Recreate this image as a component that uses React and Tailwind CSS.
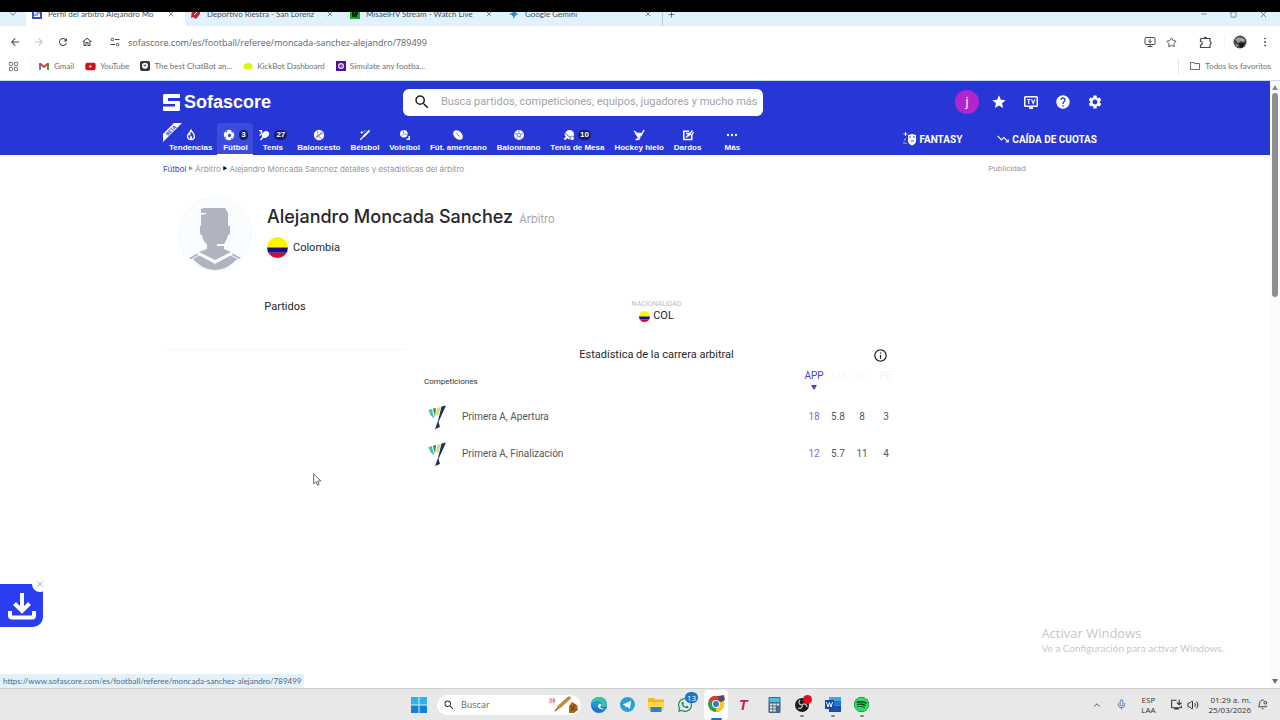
import { useState } from 'react';
import {
  MdArrowBack,
  MdArrowForward,
  MdRefresh,
  MdOutlineHome,
  MdStar,
  MdHelp,
  MdSettings,
  MdSearch,
  MdOutlineInstallDesktop,
  MdOutlineFolder,
  MdOutlineInfo,
  MdTrendingDown,
} from 'react-icons/md';
import { FaTableTennisPaddleBall, FaWhatsapp, FaSpotify, FaYoutube } from 'react-icons/fa6';
import { ChevronDown, ChevronUp, LayoutGrid, MoreVertical, Mic, Volume2, Star, X, Plus, Minus, Square, BellDot, MonitorDown } from 'lucide-react';

const SofaMark = ({ className }) => (
  <svg viewBox="0 0 17 17" className={className} fill="currentColor" aria-hidden="true">
    <path d="M1.500 0H17v4H5v3h4v3H1a1 1 0 0 1-1-1V1.500A1.500 1.500 0 0 1 1.500 0z" />
    <path d="M15.500 17H0v-4.500h12V10H9V7h7a1 1 0 0 1 1 1v7.500a1.500 1.500 0 0 1-1.500 1.500z" />
  </svg>
);

const Flag = ({ className }) => (
  <svg viewBox="0 0 20 20" className={className} role="img" aria-label="Colombia">
    <clipPath id="flag-round">
      <circle cx="10" cy="10" r="10" />
    </clipPath>
    <g clipPath="url(#flag-round)">
      <rect width="20" height="10" fill="#fdf500" />
      <rect y="10" width="20" height="5" fill="#1b0f8c" />
      <rect y="15" width="20" height="5" fill="#d80a2c" />
    </g>
  </svg>
);

const Flame = () => (
  <svg viewBox="0 0 12 12" className="h-3 w-3" fill="none" stroke="currentColor" strokeWidth="1.400">
    <path d="M6 1.200c.4 1.600 3.400 3.200 3.400 6a3.400 3.400 0 0 1-6.800 0c0-1.300.6-2.100 1.300-2.800.2.700.5 1 .9 1.200C4.700 4 5 2.300 6 1.200z" />
    <path d="M6 6.800c.8.800 1.200 1.300 1.200 2a1.200 1.200 0 0 1-2.400 0c0-.7.400-1.200 1.200-2z" fill="currentColor" stroke="none" />
  </svg>
);

const Soccer = () => (
  <svg viewBox="0 0 12 12" className="h-3 w-3">
    <circle cx="6" cy="6" r="5.200" fill="currentColor" />
    <path d="M6.500 4.500l1.800 1.300-.7 2.100H5.400l-.7-2.100zM2 3l1.800.3L4.500 1.500 3 1.800zM1.200 7.500l1.500.3.500 2-1-.6zM8 1.500l.5 1.600 2 .5-.8-1.500zM9.500 9l-1.500.5-.5 1.500 1.300-.6z" fill="#3c4bdb" />
  </svg>
);

const Tennis = () => (
  <svg viewBox="0 0 12 12" className="h-3 w-3" fill="currentColor">
    <ellipse cx="7.500" cy="5.500" rx="3.800" ry="3" transform="rotate(-35 7.500 5.500)" />
    <path d="M5.500 7.500 2.500 11" stroke="currentColor" strokeWidth="1.400" />
    <path d="M1 1.500a3 3 0 0 1 2.500 3.500L1.500 6.500M1.500 1.500h2l.5 2" stroke="currentColor" strokeWidth="1.100" fill="none" />
  </svg>
);

const Basketball = () => (
  <svg viewBox="0 0 12 12" className="h-3 w-3">
    <circle cx="6" cy="6" r="5.200" fill="currentColor" />
    <path d="M2.500 9.500l7-7M3.500 1.500c2 1.500 2 3.500 0 6M10.500 4.500c-2.500 0-4 1-5 2.500M4.500 7.500c2 0 3.500 1 4 3" fill="none" stroke="#2637d6" strokeWidth="0.600" />
  </svg>
);

const Baseball = () => (
  <svg viewBox="0 0 12 12" className="h-3 w-3" stroke="currentColor" strokeLinecap="round">
    <path d="M1.500 10.500 5 7" strokeWidth="1.200" />
    <path d="M5 7l5-5" strokeWidth="1.900" />
    <circle cx="2.800" cy="3.500" r="0.800" fill="currentColor" strokeWidth="0.800" />
    <path d="M4.500 3l1.500-1.500" strokeWidth="0.700" />
  </svg>
);

const Volleyball = () => (
  <svg viewBox="0 0 12 12" className="h-3 w-3" fill="currentColor">
    <circle cx="4.800" cy="4.800" r="3.800" />
    <path d="M4.800 4.800 4 1M4.800 4.800l3.500 1M4.800 4.800 2 7.500" stroke="#2637d6" strokeWidth="0.500" />
    <path d="M11 7v4H7.500v-1.500h2V7z" />
  </svg>
);

const Football = () => (
  <svg viewBox="0 0 12 12" className="h-3 w-3">
    <ellipse cx="6" cy="6" rx="5.600" ry="3.900" transform="rotate(45 6 6)" fill="currentColor" />
    <path d="M4.500 4.500l3 3" stroke="#2637d6" strokeWidth="0.700" />
  </svg>
);

const Handball = () => (
  <svg viewBox="0 0 12 12" className="h-3 w-3">
    <circle cx="6" cy="6" r="5" fill="currentColor" />
    <path d="M6 4.200l1.700 1.200-.6 2H4.900l-.6-2zM6 4.200V1.500M7.700 5.400l2.600-.8M7.100 7.400l1.500 2.200M4.900 7.400 3.400 9.600M4.300 5.400l-2.600-.8" fill="none" stroke="#2637d6" strokeWidth="0.600" />
  </svg>
);

const Hockey = () => (
  <svg viewBox="0 0 12 12" className="h-3 w-3" fill="none" stroke="currentColor">
    <path d="M11 1 7.500 7.500" strokeWidth="1.400" />
    <path d="M2.200 4.200h6l-1.400 3.300H4.500z" fill="currentColor" />
    <path d="M1 2l2.500 2M5 8v2.500H2.500M7 8l-1 2.500" strokeWidth="1.300" />
  </svg>
);

const Darts = () => (
  <svg viewBox="0 0 12 12" className="h-3 w-3" fill="none" stroke="currentColor">
    <path d="M7 2.200H1.800v8.300h8V6" strokeWidth="1.500" />
    <path d="M4 8.500 10.500 1.500M4 4.500h3v3M6.500 5.500h3.500L11.500 3" strokeWidth="1.300" />
  </svg>
);

const Dots = () => (
  <svg viewBox="0 0 12 12" className="h-3 w-3" fill="currentColor">
    <circle cx="2" cy="6" r="1.200" />
    <circle cx="6" cy="6" r="1.200" />
    <circle cx="10" cy="6" r="1.200" />
  </svg>
);

const sports = [
  { label: 'Tendencias', icon: <Flame /> },
  { label: 'Fútbol', icon: <Soccer />, count: 3, active: true },
  { label: 'Tenis', icon: <Tennis />, count: 27 },
  { label: 'Baloncesto', icon: <Basketball /> },
  { label: 'Béisbol', icon: <Baseball /> },
  { label: 'Voleibol', icon: <Volleyball /> },
  { label: 'Fút. americano', icon: <Football /> },
  { label: 'Balonmano', icon: <Handball /> },
  { label: 'Tenis de Mesa', icon: <FaTableTennisPaddleBall className="h-[10px] w-[10px]" />, count: 10 },
  { label: 'Hockey hielo', icon: <Hockey /> },
  { label: 'Dardos', icon: <Darts /> },
  { label: 'Más', icon: <Dots /> },
];

const competitions = [
  { name: 'Primera A, Apertura', app: 18, avg: '5.8', reds: 8, pens: 3 },
  { name: 'Primera A, Finalización', app: 12, avg: '5.7', reds: 11, pens: 4 },
];

const GeminiIcon = () => (
  <svg viewBox="0 0 10 10" className="h-[10px] w-[10px]">
    <path d="M5 0c.5 3 2 4.500 5 5-3 .5-4.500 2-5 5-.5-3-2-4.500-5-5 3-.5 4.500-2 5-5z" fill="#2e86d8" />
    <path d="M5 5H0c3 .5 4.500 2 5 5z" fill="#27a567" />
  </svg>
);

const tabs = [
  { title: 'Perfil del árbitro Alejandro Mo', icon: <span className="block h-[10px] w-[10px] bg-[#3a49d8] p-[2px] text-white"><SofaMark className="h-[6px] w-[6px]" /></span>, active: true },
  { title: 'Deportivo Riestra - San Lorenz', icon: <svg viewBox="0 0 10 10" className="h-[10px] w-[10px]"><path d="M1 0h8v5L5 10 2 8 0 9z" fill="#cf1f2e" /><path d="M3 6 7 2" stroke="#fff" /></svg> },
  { title: 'MisaelHV Stream - Watch Live', icon: <svg viewBox="0 0 10 10" className="h-[10px] w-[10px]"><rect width="10" height="10" fill="#0db01c" /><path d="M2 2h2v2h1V3h3v3H7v2H2z" fill="#02240a" /></svg> },
  { title: 'Google Gemini', icon: <GeminiIcon /> },
];

const BrowserTabs = () => (
  <div className="flex h-[14px] items-end overflow-hidden bg-[#e1f2fd] text-[8px] text-[#45525e]">
    <button type="button" aria-label="Buscar pestañas" className="flex h-6 w-[26px] shrink-0 items-center justify-center">
      <ChevronDown className="h-[10px] w-[10px]" />
    </button>
    {tabs.map((tab) => (
      <div
        key={tab.title}
        className={`flex h-6 w-[159px] shrink-0 items-center gap-[6px] pr-[10px] pl-[6px] font-[Lato,sans-serif] ${tab.active ? 'bg-white' : ''}`}
      >
        <span className="shrink-0">{tab.icon}</span>
        <span className="leading-4 whitespace-nowrap">{tab.title}</span>
        <button type="button" aria-label="Cerrar pestaña" className="ml-auto">
          <X className="h-2 w-2" />
        </button>
      </div>
    ))}
    <button type="button" aria-label="Nueva pestaña" className="flex h-6 items-center border-l border-[#b9cbd8] pl-1">
      <Plus className="h-[9px] w-[9px]" />
    </button>
    <div className="ml-auto flex h-6 items-center gap-[22px] pr-3">
      <Minus className="h-2 w-2" />
      <Square className="h-[7px] w-[7px]" />
      <X className="h-[9px] w-[9px]" />
    </div>
  </div>
);

const Toolbar = () => (
  <div className="flex h-8 items-center gap-3 bg-white pr-[9px] pl-[9px] text-[#474b50]">
    <button type="button" aria-label="Atrás"><MdArrowBack className="h-3 w-3" /></button>
    <button type="button" aria-label="Adelante" className="text-[#bfc2c5]"><MdArrowForward className="h-3 w-3" /></button>
    <button type="button" aria-label="Recargar"><MdRefresh className="h-3 w-3" /></button>
    <button type="button" aria-label="Inicio"><MdOutlineHome className="h-3 w-3" /></button>
    <div className="flex flex-1 items-center gap-2 pl-[5px]">
      <svg viewBox="0 0 10 10" className="h-[10px] w-[10px]" fill="none" stroke="currentColor">
        <circle cx="2.500" cy="2.500" r="1.300" />
        <path d="M5 2.500h4.500M.5 7.500H5" />
        <circle cx="7.500" cy="7.500" r="1.300" />
      </svg>
      <input
        aria-label="Dirección"
        className="h-4 flex-1 bg-transparent text-[9px] text-[#5d6267] outline-none"
        defaultValue="sofascore.com/es/football/referee/moncada-sanchez-alejandro/789499"
      />
    </div>
    <button type="button" aria-label="Instalar"><MonitorDown className="h-3 w-3" /></button>
    <button type="button" aria-label="Favorito" className="-ml-[2px]"><Star className="h-[11px] w-[11px]" /></button>
    <button type="button" aria-label="Extensiones" className="pl-[10px]">
      <svg viewBox="0 0 13 13" className="h-[13px] w-[13px]" fill="none" stroke="currentColor" strokeWidth="1.200">
        <path d="M1.500 2.500H11v3.300M11 8.500v3H1.500V9a1.600 1.600 0 0 0 0-3.500v-3" />
        <path d="M5 2.200a1.400 1.400 0 0 1 2.600 0M11.200 5.800a1.400 1.400 0 0 1 0 2.600" fill="currentColor" />
      </svg>
    </button>
    <button type="button" aria-label="Perfil" className="border-l border-gray-100 pl-2">
      <svg viewBox="0 0 14 14" className="h-[14px] w-[14px]">
        <circle cx="7" cy="7" r="6.500" fill="#4b474f" />
        <path d="M2 4 6 2l3 3-4 3z" fill="#9b9aa8" />
        <path d="M8 2l4 3-2 2-3-2zM2 9l3 1-1 2z" fill="#b4ae8c" />
        <path d="M6 8l6 0-2 4-3 1z" fill="#1d1924" />
      </svg>
    </button>
    <button type="button" aria-label="Menú"><MoreVertical className="h-3 w-3" /></button>
  </div>
);

const Bookmarks = () => (
  <nav className="flex h-[23px] items-start gap-[11px] border-b border-[#c5d8f4] bg-white pr-[9px] pl-2 font-[Lato,sans-serif] text-[8px] leading-4 text-[#6d7176]">
    <LayoutGrid className="mt-[3px] h-[11px] w-[11px]" />
    <a href="#gmail" className="flex items-center gap-[5px] border-l border-gray-100 pl-2">
      <svg viewBox="0 0 10 8" className="h-2 w-[10px]" fill="none" strokeWidth="2">
        <path d="M1 8V1" stroke="#4680ea" />
        <path d="M9 8V1" stroke="#37a553" />
        <path d="M1 1.500 5 5l4-3.500" stroke="#df3a31" />
      </svg>
      Gmail
    </a>
    <a href="#youtube" className="flex items-center gap-1"><FaYoutube className="h-[11px] w-[11px] text-[#d2101c]" />YouTube</a>
    <a href="#chatbot" className="flex items-center gap-1">
      <svg viewBox="0 0 10 10" className="h-[10px] w-[10px]">
        <rect width="10" height="10" rx="2" fill="#333" />
        <circle cx="5" cy="4.800" r="3" fill="#fff" />
        <path d="M5 3v3M3.500 4.500h3" stroke="#777" />
      </svg>
      The best ChatBot an...
    </a>
    <a href="#kickbot" className="flex items-center gap-1">
      <svg viewBox="0 0 10 10" className="h-[10px] w-[10px]"><path d="M1 3h2l1-1h3l1 1h1v2h1v1H9v2H6L5 9 4 8H1V6H0V5h1z" fill="#d9f11d" /></svg>
      KickBot Dashboard
    </a>
    <a href="#simulate" className="flex items-center gap-1">
      <svg viewBox="0 0 10 10" className="h-[10px] w-[10px]"><rect width="10" height="10" fill="#4a12a4" /><circle cx="5" cy="5" r="3" fill="#e9defa" /><path d="M5 3v4M3 5h4" stroke="#4a12a4" /></svg>
      Simulate any footba...
    </a>
    <a href="#favoritos" className="ml-auto flex items-center gap-1 border-l border-gray-200 pl-[10px]">
      <MdOutlineFolder className="h-3 w-3" />
      Todos los favoritos
    </a>
  </nav>
);

const SiteHeader = () => {
  const [query, setQuery] = useState('');

  return (
    <header className="bg-[#2637d6] text-white">
      <div className="mx-auto max-w-[944px]">
        <div className="flex h-[42px] items-center">
          <a href="#inicio" className="flex w-60 items-center gap-1">
            <SofaMark className="h-[17px] w-[17px]" />
            <span className="font-['Liberation_Sans',sans-serif] text-[18px] leading-5 font-bold">Sofascore</span>
          </a>
          <label className="flex h-[27px] w-[360px] items-center gap-[10px] rounded-md bg-white pl-[10px] text-[#222]">
            <MdSearch className="h-[18px] w-[18px]" />
            <input
              aria-label="Buscar"
              value={query}
              onChange={(e) => setQuery(e.target.value)}
              placeholder="Busca partidos, competiciones, equipos, jugadores y mucho más"
              className="min-w-0 flex-1 text-[11px] text-[#222] outline-none placeholder:text-[#a3a3a6]"
            />
          </label>
          <div className="ml-auto flex items-center gap-2">
            <button type="button" className="h-6 w-6 rounded-full bg-[#b324cc] text-[13px]">j</button>
            <button type="button" aria-label="Favoritos" className="flex w-6 justify-center"><MdStar className="h-4 w-4" /></button>
            <button type="button" aria-label="TV" className="flex w-6 justify-center">
              <svg viewBox="0 0 14 13" className="h-[13px] w-[14px]" fill="none" stroke="currentColor">
                <rect x="0.750" y="0.750" width="12.500" height="9.500" rx="0.800" strokeWidth="1.500" />
                <path d="M5 12h4" strokeWidth="1.800" />
                <path d="M3 3.500h3.500M4.750 3.500V8M7.500 3.300 9.200 7.500l1.700-4.200" strokeWidth="1.100" />
              </svg>
            </button>
            <button type="button" aria-label="Ayuda" className="flex w-6 justify-center"><MdHelp className="h-4 w-4" /></button>
            <button type="button" aria-label="Ajustes" className="flex w-6 justify-center"><MdSettings className="h-4 w-4" /></button>
          </div>
        </div>

        <div className="relative flex h-8 font-bold">
          {/* Beta ribbon */}
          <svg viewBox="0 0 19 19" className="absolute top-0 left-0 h-[19px] w-[19px]">
            <path d="M0 19v-8L11 0h8z" fill="#fff" />
            <text x="8.500" y="9.500" fontSize="5" textAnchor="middle" fill="#2637d6" transform="rotate(-45 8 8)">BETA</text>
          </svg>
          <nav className="flex pl-px font-['Liberation_Sans',sans-serif]">
            {sports.map((sport) => (
              <a
                key={sport.label}
                href={`#${sport.label}`}
                className={`flex min-w-9 flex-col items-center justify-end px-[5px] text-[8px] leading-3 whitespace-nowrap ${
                  sport.active ? 'rounded-t border-b border-white bg-[#3c4bdb]' : 'pb-px'
                } ${sport.label === 'Más' ? 'ml-2' : ''}`}
              >
                <span className="flex h-[14px] items-center gap-1">
                  {sport.icon}
                  {sport.count && (
                    <span className="rounded-full bg-[#141c6e] px-[2px] text-[8px] leading-[10px]">{sport.count}</span>
                  )}
                </span>
                {sport.label}
              </a>
            ))}
          </nav>
          <div className="ml-auto flex items-center gap-[34px] pr-[10px] text-[10px]">
            <a href="#fantasy" className="flex items-center gap-[2px]">
              <svg viewBox="0 0 14 14" className="h-[14px] w-[14px]" fill="currentColor">
                <path d="M5 3l4-1 4 1v6c0 2-2 3.500-4 4.500C7 12.500 5 11 5 9z" />
                <path d="M6 5h2M10 5h2M8 9h3" stroke="#2637d6" strokeWidth="0.900" />
                <path d="M2.500 0v4M.5 2h4M2 6.500v2M1 10v1.500M3 11v1" stroke="currentColor" strokeWidth="0.900" />
              </svg>
              FANTASY
            </a>
            <a href="#cuotas" className="flex items-center gap-[2px]">
              <MdTrendingDown className="h-[14px] w-[14px]" />
              CAÍDA DE CUOTAS
            </a>
          </div>
        </div>
      </div>
    </header>
  );
};

const Avatar = () => (
  <svg viewBox="0 0 74 74" className="h-[74px] w-[74px]">
    <circle cx="37" cy="37" r="36.500" fill="#fafdff" stroke="#eef3f6" strokeWidth="0.600" />
    <g fill="#b1b3c1">
      <path d="M23 12l3-1h21l3 5v13h2v8l-2 1c-1 5-3 7-4 9H39v2h7v3l7 3-16 8-16-8 8-3V47c-3-2-4-4-5-9l-2-1v-8h1V18l5-1v-1h-5z" />
      <path d="M20 57.500 37 66.500 54 57.500 60 61c-6 7-14 12-23 12s-17-5-23-12z" />
      <path d="M11 61l8-4.500 3 1.500-8 4.500zM63 61l-8-4.500-3 1.500 8 4.500z" />
    </g>
    <path d="M20 56.500 37 65.500 54 56.500" fill="none" stroke="#fafdff" strokeWidth="2" />
    <path d="M13 62.500 22 57.500M61 62.500 52 57.500" fill="none" stroke="#fafdff" strokeWidth="1" />
  </svg>
);

const LeagueLogo = () => (
  <svg viewBox="0 0 28 28" className="h-7 w-7">
    <path d="M4.500 7c1 4 3 7 5.500 8.500L8 6z" fill="#3fc2b6" />
    <path d="M9 5.500 11 14l1-8.800z" fill="#2c7c5c" />
    <path d="M13 5 12.500 13l1.800-1L16.800 4z" fill="#d8de52" />
    <path d="M17.500 3.500 22 2.500 14.500 19l1.500 5-5 2 3-8z" fill="#1d2f63" />
  </svg>
);

const RefereeStats = () => (
  <table className="w-full text-[10px] text-[#55565b]">
    <thead>
      <tr className="h-7 align-top">
        <th className="pt-[6px] pl-[9px] text-left text-[8px] leading-3 font-normal text-[#333]">Competiciones</th>
        <th className="w-6 font-normal text-[#4146c4]">
          <button type="button" className="flex w-full flex-col items-center leading-3">
            APP
            <svg viewBox="0 0 6 5" className="my-[3px] h-[5px] w-[6px]"><path d="M0 0h6L3 5z" fill="#4146c4" /></svg>
          </button>
        </th>
        <th className="w-6 leading-3 font-normal text-[#fafafa]">AM</th>
        <th className="w-6 leading-3 font-normal text-[#fafafa]">RO</th>
        <th className="w-6 leading-3 font-normal text-[#f3f3f5]">PE</th>
      </tr>
    </thead>
    <tbody>
      {competitions.map((row) => (
        <tr key={row.name} className="h-[37px]">
          <td className="pl-[9px]">
            <a href="#competicion" className="flex items-center gap-[10px]">
              <LeagueLogo />
              {row.name}
            </a>
          </td>
          <td className="text-center text-[#6f72cf]">{row.app}</td>
          <td className="text-center">{row.avg}</td>
          <td className="text-center">{row.reds}</td>
          <td className="text-center">{row.pens}</td>
        </tr>
      ))}
    </tbody>
  </table>
);

const Profile = () => (
  <main className="mx-auto flex w-full max-w-[944px] text-[#26272b]">
    <div className="flex-1">
      <nav className="flex h-7 items-center gap-[2px] font-[Inter,sans-serif] text-[8px] text-[#96979d]">
        <a href="#futbol" className="text-[#3b42cf]">Fútbol</a>
        <span className="text-[5px]">▶</span>
        <a href="#arbitro">Árbitro</a>
        <span className="text-[5px] text-black">▶</span>
        <span>Alejandro Moncada Sanchez detalles y estadísticas del árbitro</span>
      </nav>

      <div className="flex gap-[15px] pt-[14px] pl-[15px]">
        <Avatar />
        <div className="pt-2">
          <h1 className="flex items-baseline gap-[6px] font-[Inter,sans-serif] text-[18px] leading-6 font-medium">
            Alejandro Moncada Sanchez
            <small className="text-[11px] font-normal text-[#a4a5ab]">Árbitro</small>
          </h1>
          <p className="flex items-center gap-[5px] pt-[6px] text-[11px] leading-5">
            <Flag className="h-[21px] w-[21px]" />
            Colombia
          </p>
        </div>
      </div>

      <div className="flex pt-6">
        <section className="w-[244px]">
          <h2 className="pt-[2px] text-center text-[11px] leading-5">Partidos</h2>
          <div className="h-[33px] border-b border-[#f7f7f7]" />
        </section>

        <section className="flex-1 pr-[9px] pl-2">
          <dl className="flex flex-col items-center pt-1">
            <dt className="text-[7px] leading-[10px] text-[#b9babf]">NACIONALIDAD</dt>
            <dd className="flex items-center gap-[3px] text-[11px] leading-[14px]">
              <Flag className="h-[11px] w-[11px]" />
              COL
            </dd>
          </dl>
          <div className="grid grid-cols-[1fr_auto_1fr] items-center pt-[22px] pb-[5px] text-[11px] leading-5">
            <span />
            <h2>Estadística de la carrera arbitral</h2>
            <button type="button" aria-label="Información" className="justify-self-end pr-[10px]">
              <MdOutlineInfo className="h-[15px] w-[15px]" />
            </button>
          </div>
          <RefereeStats />
        </section>
      </div>
    </div>
    <aside className="w-[200px] pt-[6px] text-center text-[8px] leading-4 text-[#96979d]">Publicidad</aside>
  </main>
);

const Taskbar = () => (
  <footer className="relative flex h-8 items-center justify-center border-t border-[#cfcfcf] bg-[#e8e8e8] text-[8px] text-[#333]">
    <div className="flex items-center gap-[13px]">
      <svg viewBox="0 0 16 16" className="h-4 w-4">
        <path d="M0 0h7.500v7.500H0zM8.500 0H16v7.500H8.500z" fill="#2bb3ec" />
        <path d="M0 8.500h7.500V16H0zM8.500 8.500H16V16H8.500z" fill="#1283d6" />
      </svg>
      <label className="-mx-[3px] flex h-5 w-36 items-center gap-[6px] rounded-full bg-white pr-[2px] pl-[6px]">
        <MdSearch className="h-3 w-3" />
        <input aria-label="Buscar en Windows" placeholder="Buscar" className="w-0 flex-1 text-[9px] outline-none placeholder:text-[#666]" />
        <svg viewBox="0 0 32 18" className="h-[18px] w-8">
          <circle cx="5" cy="5" r="3.800" fill="#f1dfe2" />
          <path d="M3 2.500l2 2-2 2M7 2.500v4" fill="none" stroke="#c84763" />
          <path d="M8 15 13 10" stroke="#8a5a24" strokeWidth="1.500" />
          <path d="M12 11 22 2" stroke="#c48a3a" strokeWidth="3.500" strokeLinecap="round" />
          <path d="M22 10l3-4 5 3 1 5-4 3h-5z" fill="#a8681c" />
          <path d="M24 10l4 5M28 9l-4 6" stroke="#5f390c" />
        </svg>
      </label>
      {/* Edge */}
      <svg viewBox="0 0 16 16" className="h-4 w-4">
        <circle cx="8" cy="8" r="8" fill="#1679c8" />
        <path d="M0 7C1 2.500 4 0 8 0c5 0 8 3.500 8 6.500S13.500 10.500 10.500 10c-1-.3-.5-1 0-2C11 5.500 8 4 5 4.500 2.500 5 1 6 0 7z" fill="#35c3a8" />
        <path d="M0 7c2-3 7-3.500 9-.5L7 7c-1.500 1-1.500 3-.5 5C3 10.500 1.500 9 0 7z" fill="#1a9be0" />
        <path d="M10.500 8c0-1-1.500-1.500-2.500-1-1.500 1-1.500 3 0 4.300 2 1.500 4.500 1.300 6.200.2-2 .5-4.500 0-5-1.500-.2-1 1-1 1.300-2z" fill="#f0f8fc" />
      </svg>
      {/* Telegram */}
      <svg viewBox="0 0 16 16" className="h-[15px] w-[15px]">
        <circle cx="8" cy="8" r="8" fill="#27a0d8" />
        <path d="M3 8l9-4-1.500 8.500L7.500 10 6 11.500V9.500z" fill="#fff" />
      </svg>
      {/* Files */}
      <svg viewBox="0 0 16 14" className="h-[14px] w-4">
        <path d="M0 0h6l1.500 1.500H16V12H0z" fill="#f2b91d" />
        <path d="M0 4h16v8H0z" fill="#fcd648" />
        <path d="M2.500 9h11v5h-11z" fill="#2a80d2" />
      </svg>
      <span className="relative">
        <FaWhatsapp className="h-4 w-4 text-[#1f8a55]" />
        <span className="absolute -top-[5px] left-2 rounded-full bg-[#1976c8] px-[2px] text-[8px] leading-[11px] text-white">13</span>
      </span>
      <span className="-mx-[2px] flex h-[30px] w-6 flex-col items-center justify-between rounded-sm bg-white pt-[5px]">
        <svg viewBox="0 0 18 18" className="h-[18px] w-[18px]">
          <circle cx="9" cy="9" r="8" fill="#2f9e4a" />
          <path d="M9 9 2 5a8 8 0 0 1 14.500 1z" fill="#df3b30" />
          <path d="M9 9l7.500-3.500A8 8 0 0 1 9 17z" fill="#f7c724" />
          <circle cx="9" cy="9" r="4" fill="#fff" />
          <circle cx="9" cy="9" r="3" fill="#3078e0" />
          <path d="M11 1l6-1 1 5-4 2-3-2z" fill="#5b4b62" />
        </svg>
        <span className="h-[2px] w-[11px] rounded bg-[#1c6fc9]" />
      </span>
      <span className="w-4 font-['Liberation_Sans',sans-serif] text-[14px] leading-4 font-bold text-[#c61d56] italic">T</span>
      {/* Calculator */}
      <svg viewBox="0 0 12 16" className="h-4 w-[13px]">
        <rect width="12" height="16" rx="1" fill="#4b6577" />
        <rect x="1" y="1" width="10" height="4" fill="#41c4e4" />
        <path d="M1.500 7.500h9M1.500 10.500h6M1.500 13.500h6" stroke="#e7eef2" strokeWidth="1.800" strokeDasharray="2.400 0.900" />
        <path d="M8.500 9.500h2.500V15H8.500z" fill="#1f77c6" />
      </svg>
      {/* OBS */}
      <svg viewBox="0 0 18 24" className="h-6 w-[18px]">
        <circle cx="8" cy="12" r="7" fill="#1e1c1e" />
        <path d="M8 12c-3 0-4-3-2-5M8 12c2-2 5-1 5 2M8 12c1 3-2 4-4 3" fill="none" stroke="#c9c9c9" strokeWidth="1.200" />
        <circle cx="13.500" cy="6.500" r="4.500" fill="#e2101d" />
        <rect x="6" y="22" width="4" height="2" rx="1" fill="#868686" />
      </svg>
      {/* Word */}
      <svg viewBox="0 0 16 24" className="h-6 w-4">
        <path d="M4 4h12v4H4z" fill="#3ea3ea" />
        <path d="M4 8h12v4.500H4z" fill="#2273ce" />
        <path d="M4 12.500h12V19H4z" fill="#1a4fa6" />
        <rect y="7" width="9" height="9" fill="#164a9e" />
        <path d="M1.500 9l1.500 5 1.500-4.500L6 14l1.500-5" fill="none" stroke="#fff" />
        <rect x="6" y="22" width="4" height="2" rx="1" fill="#868686" />
      </svg>
      <span className="flex h-6 flex-col items-center justify-end">
        <FaSpotify className="mb-[3px] h-[15px] w-[15px] rounded-full bg-[#16301e] text-[#1fdf64]" />
        <span className="h-[2px] w-1 rounded bg-[#868686]" />
      </span>
    </div>

    <div className="absolute inset-y-0 right-3 flex items-center gap-[14px]">
      <ChevronUp className="h-[10px] w-[10px]" />
      <Mic className="h-[11px] w-[11px] text-[#4d74b4]" />
      <span className="text-center leading-[10px]">ESP<br />LAA</span>
      <span className="flex items-center gap-1">
        <MdOutlineInstallDesktop className="h-[13px] w-[13px]" />
        <Volume2 className="h-3 w-3" />
      </span>
      <span className="-ml-1 text-right leading-[10px]">01:29 a. m.<br />25/03/2026</span>
      <BellDot className="-ml-2 h-[11px] w-[11px]" />
    </div>
  </footer>
);

const App = () => {
  const [showInstall, setShowInstall] = useState(true);

  return (
    <div className="relative flex min-h-screen flex-col bg-white font-['Open_Sans',sans-serif]">
      <div className="h-3 bg-black" />
      <BrowserTabs />
      <Toolbar />
      <Bookmarks />

      <div className="relative flex flex-1">
        <div className="flex-1 font-[Roboto,sans-serif]">
          <SiteHeader />
          <Profile />
        </div>

        {/* Page scrollbar */}
        <div className="flex w-[10px] flex-col items-center bg-[#fcfcfc] py-1">
          <svg viewBox="0 0 6 5" className="h-[5px] w-[6px]"><path d="M0 5h6L3 0z" fill="#8a8a8a" /></svg>
          <div className="mt-[3px] h-[204px] w-[6px] rounded-full bg-[#8f8f8f]" />
          <svg viewBox="0 0 6 5" className="mt-auto h-[5px] w-[6px]"><path d="M0 0h6L3 5z" fill="#6f6f6f" /></svg>
        </div>

        {showInstall && (
          <div className="absolute bottom-[61px] left-0">
            <button type="button" aria-label="Descargar" className="flex h-[43px] w-[43px] items-center justify-center rounded-br-[10px] bg-[#2b3df0] text-white">
              <svg viewBox="0 0 28 28" className="h-7 w-7" fill="none" stroke="currentColor">
                <path d="M14 1v18" strokeWidth="4" />
                <path d="M6.500 11.500 14 19l7.500-7.500" strokeWidth="4" />
                <path d="M2 19v4.500a2 2 0 0 0 2 2h20a2 2 0 0 0 2-2V19" strokeWidth="4" />
              </svg>
            </button>
            <button
              type="button"
              aria-label="Cerrar"
              onClick={() => setShowInstall(false)}
              className="absolute -top-2 -right-[5px] flex h-4 w-4 items-center justify-center rounded-full bg-white text-[#a0a0a0]"
            >
              <X className="h-[10px] w-[10px]" />
            </button>
          </div>
        )}

        <div className="absolute bottom-0 left-0 bg-[#e3f1fb] px-[3px] font-[Lato,sans-serif] text-[8px] leading-[14px] text-[#57697d]">
          https://www.sofascore.com/es/football/referee/moncada-sanchez-alejandro/789499
        </div>

        <div className="absolute right-14 bottom-[33px] text-[#c6c8ca]">
          <p className="text-[13px] leading-4">Activar Windows</p>
          <p className="font-[Lato,sans-serif] text-[10px] leading-[14px]">Ve a Configuración para activar Windows.</p>
        </div>

        {/* Mouse pointer */}
        <svg viewBox="0 0 9 13" className="absolute top-[392px] left-[313px] h-[13px] w-[9px]">
          <path d="M.7.800v10l2.300-2.200 1.500 3.600 1.600-.7-1.500-3.500h3.200z" fill="#fff" stroke="#444" strokeWidth="0.800" />
        </svg>
      </div>

      <Taskbar />
    </div>
  );
};

export default App;
